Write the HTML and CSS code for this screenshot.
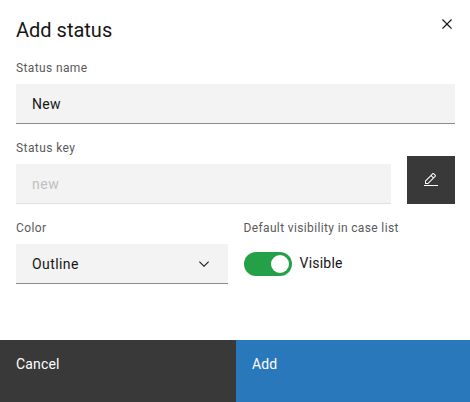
FILE: index.html
```html
<!DOCTYPE html>
<html lang="en">
<head>
<meta charset="utf-8">
<title>Add status</title>
<link rel="stylesheet" href="styles.css">
</head>
<body>
<div class="modal">
  <header class="header">
    <h1 class="title"><span class="t-title">Add status</span></h1>
    <button class="close" aria-label="Close"><svg width="20" height="20" viewBox="0 0 32 32"><path d="M24 9.4L22.6 8 16 14.6 9.4 8 8 9.4 14.6 16 8 22.6 9.4 24 16 17.4 22.6 24 24 22.6 17.4 16z"/></svg></button>
  </header>
  <main class="content">
    <div class="field">
      <div class="label"><span class="t-name">Status name</span></div>
      <div class="input"><span class="t-new">New</span></div>
    </div>
    <div class="key-row">
      <div class="field">
        <div class="label"><span class="t-key">Status key</span></div>
        <div class="input disabled"><span class="t-slug">new</span></div>
      </div>
      <button class="edit" aria-label="Edit"><svg width="16" height="16" viewBox="0 0 16 16"><path d="M1 13H15V14H1zM12.7 4.5c.4-.4.4-1 0-1.4l-1.8-1.8c-.4-.4-1-.4-1.4 0L2 8.8V12h3.2L12.7 4.5zM10.2 2L12 3.8l-1.5 1.5L8.7 3.5 10.2 2zM3 11V9.2l5-5L9.8 6l-5 5H3z"/></svg></button>
    </div>
    <div class="options">
      <div class="field">
        <div class="label"><span class="t-color">Color</span></div>
        <div class="input select"><span class="t-outline">Outline</span><svg width="16" height="16" viewBox="0 0 16 16"><path d="M8 11L3 6 3.7 5.3 8 9.6 12.3 5.3 13 6z"/></svg></div>
      </div>
      <div class="field">
        <div class="label"><span class="t-vis">Default visibility in case list</span></div>
        <div class="toggle"><span class="track"><span class="knob"></span></span><span class="t-visible">Visible</span></div>
      </div>
    </div>
  </main>
  <footer class="footer">
    <button class="btn cancel"><span class="t-cancel">Cancel</span></button>
    <button class="btn add"><span class="t-add">Add</span></button>
  </footer>
</div>
</body>
</html>
```
FILE: styles.css
```css
* { box-sizing: border-box; }
body { margin: 0; background: #fff; color: #161616; font: 14px/18px Roboto, "Liberation Sans", sans-serif; }
button { border: 0; padding: 0; font: inherit; color: inherit; background: none; }
svg { display: block; fill: #161616; }
.modal { display: flex; flex-direction: column; height: 402px; }
.header { display: flex; justify-content: space-between; height: 60px; padding-left: 16px; }
.title { margin: 16px 0 0; font-size: 20px; line-height: 28px; font-weight: 400; }
.close { display: flex; align-items: center; justify-content: center; width: 46px; height: 48px; }
.content { flex: 1; display: flex; flex-direction: column; gap: 20px; padding: 0 15px 0 16px; }
.label { height: 24px; font-size: 12px; line-height: 16px; color: #5a5a5a; }
.input { display: flex; align-items: center; height: 40px; padding: 0 16px; background: #f3f3f3; border-bottom: 1px solid #8d8d8d; }
.disabled { color: #c0c0c0; border-bottom-color: #e0e0e0; }
.select { justify-content: space-between; }
.key-row, .options { display: flex; gap: 16px; }
.key-row { align-items: flex-end; margin-top: -4px; }
.key-row .field { flex: 1; }
.edit { display: flex; align-items: center; justify-content: center; width: 48px; height: 48px; background: #393939; }
.edit svg { fill: #fff; }
.options { margin-top: -4px; }
.options .field { width: 212px; }
.toggle { display: flex; align-items: center; gap: 8px; height: 40px; }
.track { display: flex; justify-content: flex-end; width: 48px; height: 24px; padding: 3px; border-radius: 12px; background: #24a148; }
.knob { width: 18px; height: 18px; border-radius: 50%; background: #fff; }
.footer { display: flex; height: 62px; color: #fff; }
.btn { display: flex; align-items: flex-start; height: 62px; padding: 15px 16px; }
.cancel { width: 236px; background: #393939; }
.add { flex: 1; background: #2a78bc; }
.t-title { letter-spacing: 0; }
.label .t-name { letter-spacing: .38px; }
.label .t-key { letter-spacing: .42px; }
.label .t-color { letter-spacing: .4px; }
.label .t-vis { letter-spacing: .36px; }
.t-new { letter-spacing: .3px; }
.t-slug { letter-spacing: .6px; }
.t-outline { letter-spacing: .42px; }
.t-visible { letter-spacing: .22px; padding-bottom: 2px; }
.t-cancel { letter-spacing: .15px; }
.t-add { letter-spacing: .1px; }
```
